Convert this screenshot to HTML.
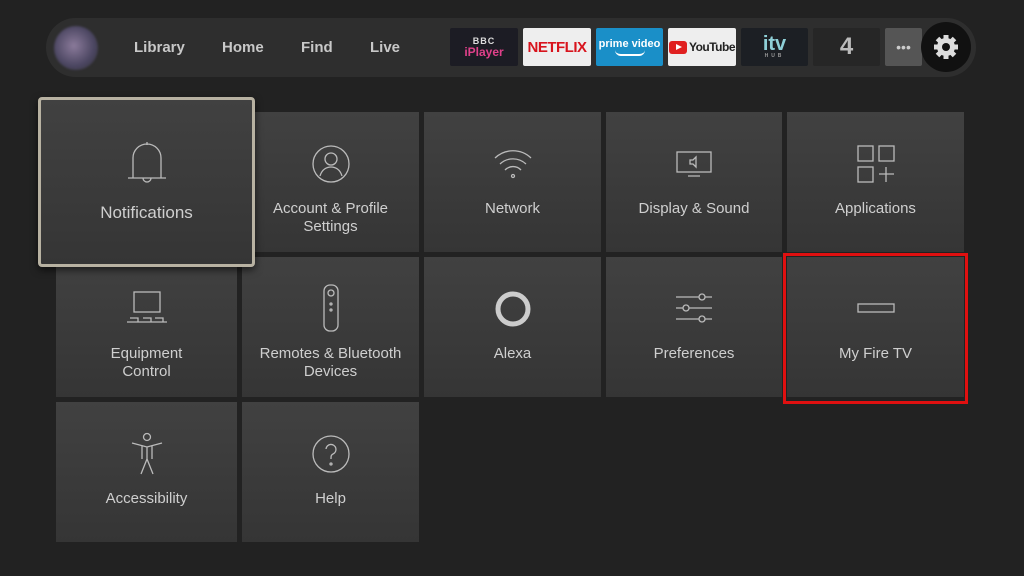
<!DOCTYPE html>
<html><head><meta charset="utf-8"><style>
*{margin:0;padding:0;box-sizing:border-box}
body{width:1024px;height:576px;background:#222;font-family:"Liberation Sans","DejaVu Sans",sans-serif;position:relative;overflow:hidden}
.bar{position:absolute;left:46px;top:18px;width:930px;height:59px;border-radius:30px;background:#2e2e2e}
.av{position:absolute;left:54px;top:26px;width:44px;height:44px;border-radius:50%;background:radial-gradient(circle at 45% 45%,#8a7a9a,#4a4560 60%,#333 100%);filter:blur(1px)}
.nav{position:absolute;top:39px;color:#c8c8c8;font-size:15px;font-weight:bold}
.app{position:absolute;top:28px;height:38px;border-radius:2px;display:flex;align-items:center;justify-content:center}
.t{position:absolute;background:linear-gradient(180deg,#414141,#353535);color:#cfcfcf;font-size:15px;text-align:center}
.t svg{position:absolute;left:50%;transform:translateX(-50%)}
.t .l{position:absolute;left:0;right:0;line-height:18px}
</style></head><body>
<div class="bar"></div>
<div class="av"></div>
<div class="nav" style="left:134px">Library</div>
<div class="nav" style="left:222px">Home</div>
<div class="nav" style="left:301px">Find</div>
<div class="nav" style="left:370px">Live</div>
<div class="app" style="left:450px;width:68px;background:#1c1c24;flex-direction:column;line-height:11px"><span style="color:#ddd;font-size:9px;font-weight:bold;letter-spacing:1px">BBC</span><span style="color:#e0408a;font-size:12px;font-weight:bold">iPlayer</span></div>
<div class="app" style="left:523px;width:68px;background:#eee;color:#d8141d;font-size:15px;font-weight:bold;letter-spacing:-0.5px">NETFLIX</div>
<div class="app" style="left:596px;width:67px;background:#1a8fc8;color:#fff;font-size:11px;font-weight:bold;flex-direction:column;line-height:12px">prime video<span style="display:block;width:30px;height:6px;border-bottom:2px solid #fff;border-radius:0 0 15px 15px"></span></div>
<div class="app" style="left:668px;width:68px;background:#eee;color:#222;font-size:12px;font-weight:bold;letter-spacing:-0.5px"><span style="display:inline-block;width:18px;height:13px;background:#e02020;border-radius:3px;margin-right:2px;position:relative"><span style="position:absolute;left:7px;top:3px;border-left:6px solid #fff;border-top:3.5px solid transparent;border-bottom:3.5px solid transparent"></span></span>YouTube</div>
<div class="app" style="left:741px;width:67px;background:#1c1f24;color:#8fd0d8;font-size:20px;font-weight:bold;flex-direction:column;line-height:18px">itv<span style="font-size:5px;color:#999;letter-spacing:3px;line-height:6px">HUB</span></div>
<div class="app" style="left:813px;width:67px;background:#262626;color:#bbb;font-size:24px;font-weight:bold">4</div>
<div class="app" style="left:885px;width:37px;background:#555;color:#ccc;font-size:14px">•••</div>
<div style="position:absolute;left:921px;top:22px;width:50px;height:50px;border-radius:50%;background:#111"></div>
<svg style="position:absolute;left:932px;top:33px" width="28" height="28" viewBox="0 0 28 28"><g fill="#ddd"><circle cx="14" cy="14" r="9"/><g stroke="#ddd" stroke-width="5"><line x1="14" y1="2" x2="14" y2="26"/><line x1="2" y1="14" x2="26" y2="14"/><line x1="5.5" y1="5.5" x2="22.5" y2="22.5"/><line x1="22.5" y1="5.5" x2="5.5" y2="22.5"/></g></g><circle cx="14" cy="14" r="4" fill="#111"/></svg>

<div class="t" style="left:242px;top:112px;width:177px;height:140px"><svg style="top:32px" width="40" height="40" viewBox="0 0 40 40" fill="none" stroke="#bbb" stroke-width="1.3"><circle cx="20" cy="20" r="18"/><circle cx="20" cy="15" r="6"/><path d="M9 32c2-7 7-9 11-9s9 2 11 9"/></svg><div class="l" style="top:88px">Account &amp; Profile<br>Settings</div></div>
<div class="t" style="left:424px;top:112px;width:177px;height:140px"><svg style="top:34px" width="40" height="34" viewBox="0 0 40 34" fill="none" stroke="#bbb" stroke-width="1.3"><path d="M2 12a26 26 0 0 1 36 0M7 18a19 19 0 0 1 26 0M12 24a11 11 0 0 1 16 0"/><circle cx="20" cy="30" r="1.5"/></svg><div class="l" style="top:88px">Network</div></div>
<div class="t" style="left:606px;top:112px;width:176px;height:140px"><svg style="top:38px" width="40" height="28" viewBox="0 0 40 28" fill="none" stroke="#bbb" stroke-width="1.3"><rect x="3" y="2" width="34" height="20"/><path d="M14 26h12M16 10h3l3-3v10l-3-3h-3z"/></svg><div class="l" style="top:88px">Display &amp; Sound</div></div>
<div class="t" style="left:787px;top:112px;width:177px;height:140px"><svg style="top:32px" width="40" height="40" viewBox="0 0 40 40" fill="none" stroke="#bbb" stroke-width="1.3"><rect x="2" y="2" width="15" height="15"/><rect x="23" y="2" width="15" height="15"/><rect x="2" y="23" width="15" height="15"/><path d="M30 23v15M23 30h15"/></svg><div class="l" style="top:88px">Applications</div></div>

<div class="t" style="left:56px;top:257px;width:181px;height:140px"><svg style="top:33px" width="44" height="36" viewBox="0 0 44 36" fill="none" stroke="#bbb" stroke-width="1.3"><rect x="9" y="2" width="26" height="20"/><path d="M2 32h40M5 28h8v4M18 28h8v4M30 28h8v4"/></svg><div class="l" style="top:88px">Equipment<br>Control</div></div>
<div class="t" style="left:242px;top:257px;width:177px;height:140px"><svg style="top:26px" width="20" height="50" viewBox="0 0 20 50" fill="none" stroke="#bbb" stroke-width="1.3"><rect x="3" y="2" width="14" height="46" rx="6"/><circle cx="10" cy="10" r="3"/><circle cx="10" cy="21" r="1"/><circle cx="10" cy="27" r="1"/></svg><div class="l" style="top:88px">Remotes &amp; Bluetooth<br>Devices</div></div>
<div class="t" style="left:424px;top:257px;width:177px;height:140px"><svg style="top:32px" width="40" height="40" viewBox="0 0 40 40" fill="none"><circle cx="20" cy="20" r="15" stroke="#ccc" stroke-width="5"/></svg><div class="l" style="top:88px">Alexa</div></div>
<div class="t" style="left:606px;top:257px;width:176px;height:140px"><svg style="top:34px" width="40" height="34" viewBox="0 0 40 34" fill="none" stroke="#bbb" stroke-width="1.3"><path d="M2 6h36M2 17h36M2 28h36"/><circle cx="28" cy="6" r="3" fill="#3c3c3c"/><circle cx="12" cy="17" r="3" fill="#3c3c3c"/><circle cx="28" cy="28" r="3" fill="#3c3c3c"/></svg><div class="l" style="top:88px">Preferences</div></div>
<div class="t" style="left:787px;top:257px;width:177px;height:140px"><svg style="top:45px" width="40" height="12" viewBox="0 0 40 12" fill="none" stroke="#bbb" stroke-width="1.3"><rect x="2" y="2" width="36" height="8"/></svg><div class="l" style="top:88px">My Fire TV</div></div>
<div style="position:absolute;left:783px;top:253px;width:185px;height:151px;border:3px solid #e01010"></div>

<div class="t" style="left:56px;top:402px;width:181px;height:140px"><svg style="top:30px" width="34" height="44" viewBox="0 0 34 44" fill="none" stroke="#bbb" stroke-width="1.3"><circle cx="17" cy="5" r="3.5"/><path d="M2 11l15 4 15-4M17 15v12M11 42l6-15 6 15M12 14v13M22 14v13"/></svg><div class="l" style="top:88px">Accessibility</div></div>
<div class="t" style="left:242px;top:402px;width:177px;height:140px"><svg style="top:32px" width="40" height="40" viewBox="0 0 40 40" fill="none" stroke="#bbb" stroke-width="1.3"><circle cx="20" cy="20" r="18"/><path d="M15 15a5 5 0 1 1 7 5c-2 1-2 2-2 5"/><circle cx="20" cy="30" r="1"/></svg><div class="l" style="top:88px">Help</div></div>

<div class="t" style="left:38px;top:97px;width:217px;height:170px;border:3px solid #b8b2a2;border-radius:4px;box-shadow:0 3px 8px rgba(0,0,0,.6);font-size:17px"><svg style="top:40px" width="44" height="44" viewBox="0 0 44 44" fill="none" stroke="#bbb" stroke-width="1.3"><path d="M22 2v3M8 38V18a14 14 0 0 1 28 0v20M3 38h38M18 38a4 4 0 0 0 8 0"/></svg><div class="l" style="top:104px">Notifications</div></div>
</body></html>
